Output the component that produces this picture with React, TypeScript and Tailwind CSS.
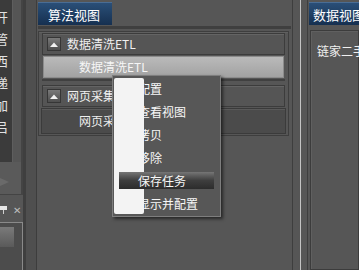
import React from "react";

const FONT = { fontFamily: '"Noto Sans CJK SC", "Noto Sans", sans-serif' };

const sideChars = ["开", "管", "西", "递", "加", "吕"];

const menuItems = ["配置", "查看视图", "拷贝", "移除", "保存任务", "显示并配置"];

function CollapseIcon() {
  return (
    <span className="w-[14px] h-[14px] shrink-0 border border-[#363636] bg-gradient-to-b from-[#7a7a7a] to-[#4e4e4e] flex items-center justify-center">
      <svg width="8" height="5" viewBox="0 0 8 5">
        <path d="M0 5 L4 0.5 L8 5 Z" fill="#f2f2f2" />
      </svg>
    </span>
  );
}

function GroupHeader({ title }: { title: string }) {
  return (
    <div className="h-[22px] mx-[3px] border border-[#3c3c3c] shadow-[inset_0_1px_0_#646464] bg-[#555] flex items-center gap-[6px] pl-[4px]">
      <CollapseIcon />
      <span className="text-[12px] text-[#f0f0f0] leading-none">{title}</span>
    </div>
  );
}

function ContextMenu() {
  return (
    <div className="absolute left-[112px] top-[75px] w-[109px] h-[142px] bg-[#575757] border border-[#7e7e7e] shadow-[2px_2px_3px_rgba(0,0,0,0.55)] pt-[1px]">
      {/* left icon strip, drawn above the labels */}
      <div className="absolute left-[1px] top-[2px] w-[30px] h-[136px] bg-[#f3f3f3] rounded-[2px] z-10" />
      {menuItems.map((item) =>
        item === "保存任务" ? (
          <div key={item} className="relative z-20 h-[23px] py-[3px] pl-[6px]">
            <div className="h-[17px] w-[95px] bg-gradient-to-b from-[#767676] via-[#3e3e3e] to-[#2c2c2c] flex items-center pl-[19px]">
              <span className="text-[12px] text-[#f7f7f7] leading-none">{item}</span>
            </div>
          </div>
        ) : (
          <div key={item} className="h-[23px] flex items-center pl-[25px]">
            <span className="text-[12px] text-[#f7f7f7] leading-none">{item}</span>
          </div>
        )
      )}
    </div>
  );
}

export default function App() {
  return (
    <div className="relative w-[359px] h-[270px] overflow-hidden bg-[#565656] flex" style={FONT}>
      {/* left docked panels */}
      <div className="w-[37px] h-full flex shrink-0">
        <div className="w-[23px] h-full flex flex-col">
          <div className="h-[162px] flex">
            <div className="w-[13px] bg-[#3b3b3b] border-r border-[#5e5e5e] flex flex-col pt-[9px] gap-[6px] overflow-hidden">
              {sideChars.map((c) => (
                <span key={c} className="text-[13px] leading-[16px] text-[#e2e2e2] -ml-[5px]">{c}</span>
              ))}
            </div>
            <div className="flex-1 bg-[#555] border-r-2 border-[#444]" />
          </div>
          <div className="h-[33px] bg-[#5a5a5a] border-r-2 border-b border-[#444] flex items-end pb-[8px]">
            <svg width="9" height="8" viewBox="0 0 9 8">
              <path d="M0 0 L9 4 L0 8 Z" fill="#6a6a6a" />
            </svg>
          </div>
          <div className="h-[27px] flex items-center gap-[6px] pt-[2px]">
            <svg width="7" height="8" viewBox="0 0 7 8">
              <rect x="0" y="0" width="7" height="4" fill="#e6e6e6" />
              <rect x="3" y="4" width="1" height="4" fill="#cfcfcf" />
            </svg>
            <span className="text-[10px] leading-none text-[#bdbdbd]">✕</span>
          </div>
          <div className="flex-1 border-t border-r border-[#8a8a8a] bg-[#4c4c4c] pt-[4px]">
            <div className="w-[14px] h-[20px] bg-gradient-to-b from-[#7a7a7a] to-[#5a5a5a]" />
          </div>
        </div>
        <div className="w-[14px] h-full bg-[#4f4f4f] border-l-[3px] border-[#3f3f3f] border-r border-r-[#3d3d3d]" />
      </div>

      {/* algorithm view */}
      <div className="w-[255px] h-full flex flex-col shrink-0 pl-[1px]">
        <div className="h-[26px] flex items-end pb-[1px]">
          <div className="w-[74px] h-[23px] bg-gradient-to-b from-[#2a4f78] to-[#163050] border-t border-[#4a6d94] flex items-center pl-[10px]">
            <span className="text-[13px] text-white leading-none">算法视图</span>
          </div>
        </div>
        <div className="h-[3px] bg-[#3f3f3f] mr-[1px]" />
        <div className="mt-[2px] mr-[3px] border border-[#3e3e3e] shadow-[inset_0_1px_0_#606060] pt-[1px] pb-[1px] flex flex-col">
          <GroupHeader title="数据清洗ETL" />
          <div className="h-[22px] mx-[4px] mt-[1px] bg-gradient-to-b from-[#bababa] to-[#a2a2a2] border border-[#8c8c8c] flex items-center pl-[35px]">
            <span className="text-[12px] text-[#f6f6f6] leading-none">数据清洗ETL</span>
          </div>
          <div className="h-[2px] mx-[3px] mt-[1px] bg-[#404040]" />
          <div className="h-[4px]" />
          <GroupHeader title="网页采集ETL" />
          <div className="h-[26px] mx-[2px] mt-[1px] bg-[#4b4b4b] border border-[#3b3b3b] shadow-[inset_0_1px_0_#5a5a5a] flex items-center pl-[37px]">
            <span className="text-[12px] text-[#eeeeee] leading-none">网页采集ETL</span>
          </div>
        </div>
      </div>

      {/* splitter */}
      <div className="w-[16px] h-full flex shrink-0 border-l border-r border-[#3e3e3e]">
        <div className="flex-1" />
        <div className="w-[1px] bg-[#c4c4c4]" />
        <div className="flex-1" />
      </div>

      {/* data view */}
      <div className="flex-1 h-full flex flex-col pl-[1px] overflow-hidden">
        <div className="h-[26px] flex items-end pb-[1px]">
          <div className="w-[60px] shrink-0 h-[23px] bg-gradient-to-b from-[#2a4f78] to-[#163050] border-t border-[#4a6d94] flex items-center pl-[4px] whitespace-nowrap">
            <span className="text-[13px] text-white leading-none">数据视图</span>
          </div>
        </div>
        <div className="mt-[4px] ml-[1px] flex-1 border border-[#3c3c3c] shadow-[inset_1px_1px_0_#606060] pt-[6px] pl-[6px] whitespace-nowrap">
          <span className="text-[12px] text-[#f0f0f0] leading-none">链家二手房</span>
        </div>
      </div>

      <ContextMenu />
    </div>
  );
}
